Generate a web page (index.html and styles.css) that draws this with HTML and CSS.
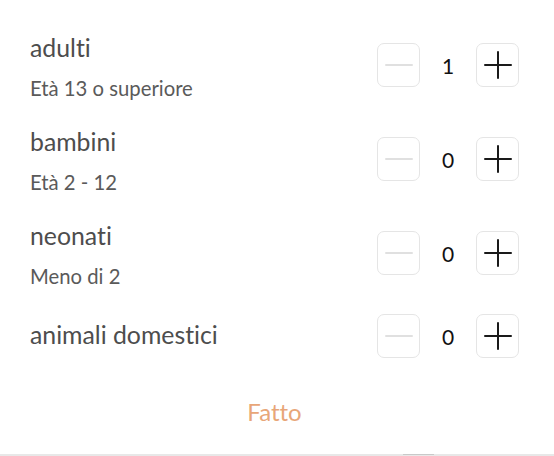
FILE: index.html
```html
<!DOCTYPE html>
<html lang="it">
<head>
<meta charset="utf-8">
<link rel="stylesheet" href="styles.css">
</head>
<body>
<div class="panel">
  <div class="row">
    <div class="info">
      <div class="label">adulti</div>
      <div class="sub">Età 13 o superiore</div>
    </div>
    <div class="counter">
      <button class="btn minus" aria-label="meno"><svg viewBox="0 0 24 24"><path d="M1 12h22"/></svg></button>
      <span class="count">1</span>
      <button class="btn plus" aria-label="più"><svg viewBox="0 0 24 24"><path d="M1 12h22M12 1v22"/></svg></button>
    </div>
  </div>
  <div class="row">
    <div class="info">
      <div class="label">bambini</div>
      <div class="sub">Età 2 - 12</div>
    </div>
    <div class="counter">
      <button class="btn minus" aria-label="meno"><svg viewBox="0 0 24 24"><path d="M1 12h22"/></svg></button>
      <span class="count">0</span>
      <button class="btn plus" aria-label="più"><svg viewBox="0 0 24 24"><path d="M1 12h22M12 1v22"/></svg></button>
    </div>
  </div>
  <div class="row">
    <div class="info">
      <div class="label">neonati</div>
      <div class="sub">Meno di 2</div>
    </div>
    <div class="counter">
      <button class="btn minus" aria-label="meno"><svg viewBox="0 0 24 24"><path d="M1 12h22"/></svg></button>
      <span class="count">0</span>
      <button class="btn plus" aria-label="più"><svg viewBox="0 0 24 24"><path d="M1 12h22M12 1v22"/></svg></button>
    </div>
  </div>
  <div class="row last">
    <div class="info">
      <div class="label">animali domestici</div>
    </div>
    <div class="counter">
      <button class="btn minus" aria-label="meno"><svg viewBox="0 0 24 24"><path d="M1 12h22"/></svg></button>
      <span class="count">0</span>
      <button class="btn plus" aria-label="più"><svg viewBox="0 0 24 24"><path d="M1 12h22M12 1v22"/></svg></button>
    </div>
  </div>
  <div class="footer">
    <button class="done">Fatto</button>
  </div>
</div>
<div class="bottom-line"><span class="thumb"></span></div>
</body>
</html>
```

FILE: styles.css
```css
* { box-sizing: border-box; }
html, body { margin: 0; padding: 0; background: #fff; }
body {
  width: 554px;
  height: 456px;
  font-family: Lato, "Noto Sans", sans-serif;
  font-variant-ligatures: none;
  display: flex;
  flex-direction: column;
}
.panel {
  flex: 1;
  padding: 30px 35px 0 30px;
  display: flex;
  flex-direction: column;
}
.row {
  display: flex;
  justify-content: space-between;
  align-items: flex-start;
  height: 94px;
  flex: none;
}
.row.last { height: 46px; align-items: center; }
.info { display: flex; flex-direction: column; }
.label {
  font-size: 24.8px;
  color: #4d4d4d;
  line-height: 36px;
}
.sub {
  font-size: 20.3px;
  color: #5a5a5a;
  line-height: 28px;
  margin-top: 8px;
}
.counter {
  display: flex;
  align-items: center;
  margin-top: 13px;
}
.row.last .counter { margin-top: 2px; }
.btn {
  width: 43px;
  height: 44px;
  border: 1px solid #e5e5e5;
  border-radius: 7px;
  background: #fff;
  padding: 0;
  display: flex;
  align-items: center;
  justify-content: center;
}
.btn svg { width: 30px; height: 30px; fill: none; stroke-width: 1.6; }
.minus svg { stroke: #e0e0e0; }
.plus svg { stroke: #1a1a1a; }
.count {
  width: 56px;
  text-align: center;
  font-family: Lato, sans-serif;
  font-size: 21px;
  color: #111;
}
.footer {
  display: flex;
  justify-content: center;
  margin-top: 39px;
}
.done {
  border: 0;
  background: none;
  font-family: Lato, sans-serif;
  font-variant-ligatures: none;
  font-size: 24px;
  line-height: 30px;
  color: #e8a678;
  padding: 0;
}
.bottom-line {
  height: 2px;
  background: #e8e8e8;
  position: relative;
  flex: none;
}
.thumb {
  position: absolute;
  left: 403px;
  width: 31px;
  top: 0;
  height: 1px;
  background: #c9c9c9;
}
```
